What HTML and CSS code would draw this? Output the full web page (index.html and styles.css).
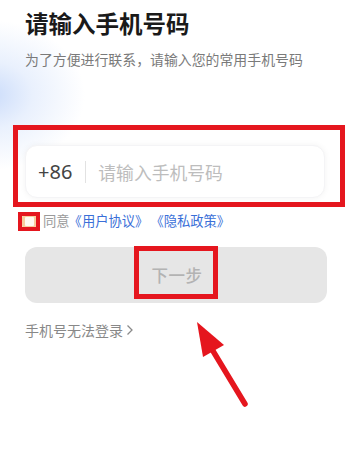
FILE: index.html
```html
<!DOCTYPE html>
<html lang="zh-CN">
<head>
<meta charset="utf-8">
<link rel="stylesheet" href="styles.css">
</head>
<body>
<div class="page">
  <h1 class="title">请输入手机号码</h1>
  <p class="subtitle">为了方便进行联系，请输入您的常用手机号码</p>

  <div class="field-wrap">
    <div class="field">
      <span class="code">+86</span>
      <span class="divider"></span>
      <span class="placeholder">请输入手机号码</span>
    </div>
    <div class="mark mark-field"></div>
  </div>

  <div class="agree">
    <span class="check-wrap"><span class="check"></span><span class="mark mark-check"></span></span>
    <span class="agree-text">同意</span><span class="link">《用户协议》</span><span class="link link-2">《隐私政策》</span>
  </div>

  <div class="btn">
    <span class="btn-label">下一步<span class="mark mark-btn"></span></span>
  </div>

  <div class="help">手机号无法登录<svg class="chev" width="8" height="12" viewBox="0 0 8 12"><path d="M1.5 1.5 L6 6 L1.5 10.5" fill="none" stroke="#8a8a8a" stroke-width="1.3"/></svg></div>

  <svg class="arrow" width="356" height="465" viewBox="0 0 356 465">
    <line x1="245" y1="404" x2="210" y2="346" stroke="#e5161e" stroke-width="5.5" stroke-linecap="round"/>
    <polygon points="197,322 224,345 203,357" fill="#e5161e"/>
  </svg>
</div>
</body>
</html>
```

FILE: styles.css
```css
* { box-sizing: border-box; }
html, body { margin: 0; padding: 0; }
body {
  width: 356px;
  height: 465px;
  overflow: hidden;
  background: #ffffff;
  font-family: "Noto Sans CJK SC", "Noto Sans", sans-serif;
}
.page {
  position: relative;
  height: 465px;
  padding: 8px 29px 0 25px;
  display: flex;
  flex-direction: column;
  background:
    radial-gradient(ellipse 95px 75px at -10px 95px, rgba(200, 218, 250, 0.95) 0%, rgba(222, 233, 252, 0.65) 45%, rgba(255, 255, 255, 0) 100%);
}
.title {
  margin: 0;
  font-size: 23.5px;
  line-height: 30px;
  font-weight: 700;
  color: #1a1a1a;
}
.subtitle {
  margin: 11px 0 0;
  font-size: 13.9px;
  line-height: 20px;
  color: #7a7a7a;
}
.field-wrap {
  position: relative;
  margin-top: 76px;
  width: 300px;
}
.field {
  height: 53px;
  border-radius: 12px;
  background: #fff;
  box-shadow: 0 0 6px rgba(0, 0, 0, 0.05);
  border: 1px solid #f4f4f6;
  display: flex;
  align-items: center;
  padding-left: 12px;
}
.code {
  font-size: 20px;
  color: #444;
  font-family: "Noto Sans", sans-serif;
}
.divider {
  width: 1px;
  height: 22px;
  background: #e2e2e2;
  margin: 0 12px 0 13px;
}
.placeholder {
  font-size: 17.8px;
  color: #bdbdbd;
}
.mark {
  position: absolute;
  border: 5px solid #e5161e;
}
.mark-field {
  top: -20px;
  left: -12px;
  right: -20px;
  bottom: -9px;
}
.agree {
  margin-top: 13px;
  display: flex;
  align-items: center;
  height: 20px;
  font-size: 13.3px;
  line-height: 20px;
}
.check-wrap {
  position: relative;
  width: 15px;
  height: 15px;
  margin-left: -3px;
  margin-right: 6px;
}
.check {
  display: block;
  width: 15px;
  height: 15px;
  border: 3px solid #f7cf9f;
  border-radius: 4px;
  background: #fffaf2;
}
.mark-check {
  top: -2px;
  left: -4px;
  width: 22px;
  height: 19px;
  border-width: 4px;
}
.agree-text { color: #9a9a9a; }
.link { color: #3a6fd8; margin-left: -1px; }
.link-2 { margin-left: 2px; }
.btn {
  margin-top: 16px;
  width: 302px;
  height: 56px;
  border-radius: 12px;
  background: #e6e6e6;
  display: flex;
  align-items: center;
  justify-content: center;
}
.btn-label {
  position: relative;
  font-size: 16.5px;
  color: #b3b3b3;
  font-weight: 500;
  letter-spacing: 0.5px;
  margin-left: 2px;
}
.mark-btn {
  top: -17px;
  left: -18px;
  right: -15px;
  bottom: -12px;
}
.help {
  margin-top: 17px;
  font-size: 14px;
  line-height: 20px;
  color: #888;
  display: flex;
  align-items: center;
}
.chev { margin-left: 3px; }
.arrow {
  position: absolute;
  left: 0;
  top: 0;
  pointer-events: none;
}
```
